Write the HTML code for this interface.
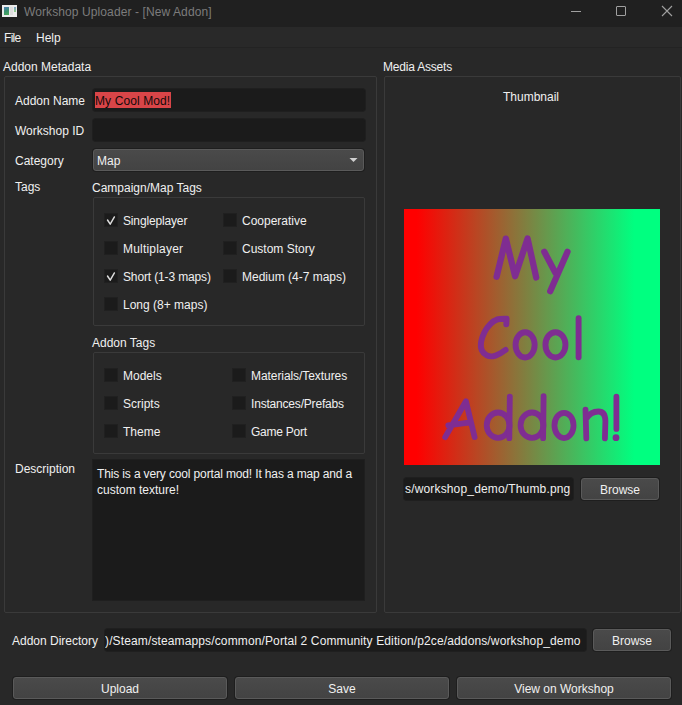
<!DOCTYPE html>
<html><head><meta charset="utf-8">
<style>
*{margin:0;padding:0;box-sizing:border-box}
html,body{width:682px;height:705px;overflow:hidden;background:#282828}
body{position:relative;font-family:"Liberation Sans",sans-serif;font-size:12px;color:#f0f0f0}
.a{position:absolute;white-space:nowrap}
.t{position:absolute;white-space:nowrap;line-height:14px;height:14px}
#title{left:0;top:0;width:682px;height:27px;background:#202020}
#menu{left:0;top:27px;width:682px;height:21px;background:#292929;border-bottom:1px solid #232323}
.gb{position:absolute;border:1px solid #3a3a3a;border-radius:2px}
.le{position:absolute;background:#1b1b1b;border-radius:3px;height:22px;box-shadow:0 0 0 1px #1f1f1f}
.btn{position:absolute;height:22px;border:1px solid #5a5a5a;border-radius:3px;background:linear-gradient(#4a4a4a,#434343);box-shadow:0 0 0 1px #1e1e1e;text-align:center;line-height:22px}
.cb{position:absolute;width:14px;height:14px;background:#1b1b1b;border:1px solid #202020}
</style></head><body>
<div id="title" class="a">
  <div class="a" style="left:2px;top:5px;width:15px;height:12px;background:#ececec"></div>
  <div class="a" style="left:4px;top:7px;width:5px;height:8px;background:linear-gradient(160deg,#4f7fb8,#3a9070 50%,#4cab58)"></div>
  <div class="a" style="left:10px;top:7px;width:3px;height:8px;background:#dedede"></div>
  <div class="a" style="left:14px;top:7px;width:2px;height:5px;background:linear-gradient(#7fa0d0,#90d080)"></div>
  <div class="t" style="left:24px;top:5px;color:#7c7c7c;letter-spacing:0.1px">Workshop Uploader - [New Addon]</div>
  <div class="a" style="left:571px;top:11px;width:10px;height:1px;background:#a0a0a0"></div>
  <div class="a" style="left:616px;top:6px;width:10px;height:10px;border:1px solid #a0a0a0;border-radius:1px"></div>
  <svg class="a" style="left:661px;top:5px" width="12" height="12" viewBox="0 0 12 12"><path d="M1 1L11 11M11 1L1 11" stroke="#a0a0a0" stroke-width="1.1"/></svg>
</div>
<div id="menu" class="a">
  <div class="t" style="left:4px;top:4px;letter-spacing:-0.7px">File</div>
  <div class="t" style="left:36px;top:4px">Help</div>
</div>

<div class="t" style="left:3px;top:60px">Addon Metadata</div>
<div class="gb" style="left:4px;top:76px;width:373px;height:537px"></div>
<div class="t" style="left:383px;top:60px;letter-spacing:-0.2px">Media Assets</div>
<div class="gb" style="left:384px;top:76px;width:297px;height:537px"></div>

<div class="t" style="left:15px;top:94px">Addon Name</div>
<div class="le" style="left:93px;top:89px;width:272px"></div>
<div class="a" style="left:95px;top:92px;width:76px;height:16px;background:#d94548"></div>
<div class="t" style="left:95px;top:94px;color:#120a0a;letter-spacing:0.1px">My Cool Mod!</div>

<div class="t" style="left:15px;top:124px">Workshop ID</div>
<div class="le" style="left:93px;top:119px;width:272px"></div>

<div class="t" style="left:15px;top:154px">Category</div>
<div class="btn" style="left:93px;top:149px;width:271px;text-align:left;padding-left:3px"><span>Map</span></div>
<svg class="a" style="left:349px;top:157px" width="9" height="6" viewBox="0 0 9 6"><path d="M0.5 1L8.5 1L4.5 5Z" fill="#d0d0d0"/></svg>

<div class="t" style="left:15px;top:180px">Tags</div>
<div class="t" style="left:92px;top:181px">Campaign/Map Tags</div>
<div class="gb" style="left:93px;top:197px;width:272px;height:129px"></div>
<div class="cb" style="left:104px;top:213px"></div><div class="t" style="left:123px;top:214px;letter-spacing:-0.15px">Singleplayer</div>
<div class="cb" style="left:223px;top:213px"></div><div class="t" style="left:242px;top:214px">Cooperative</div>
<div class="cb" style="left:104px;top:241px"></div><div class="t" style="left:123px;top:242px;letter-spacing:0.2px">Multiplayer</div>
<div class="cb" style="left:223px;top:241px"></div><div class="t" style="left:242px;top:242px">Custom Story</div>
<div class="cb" style="left:104px;top:269px"></div><div class="t" style="left:123px;top:270px;letter-spacing:-0.14px">Short (1-3 maps)</div>
<div class="cb" style="left:223px;top:269px"></div><div class="t" style="left:242px;top:270px">Medium (4-7 maps)</div>
<div class="cb" style="left:104px;top:297px"></div><div class="t" style="left:123px;top:298px">Long (8+ maps)</div>
<svg class="a" style="left:104px;top:213px" width="14" height="13" viewBox="0 0 14 13"><path d="M3.5 7L6.2 11.2L10.4 3.9" stroke="#dedede" stroke-width="1.45" fill="none" stroke-linecap="round" stroke-linejoin="round"/></svg>
<svg class="a" style="left:104px;top:269px" width="14" height="13" viewBox="0 0 14 13"><path d="M3.5 7L6.2 11.2L10.4 3.9" stroke="#dedede" stroke-width="1.45" fill="none" stroke-linecap="round" stroke-linejoin="round"/></svg>

<div class="t" style="left:92px;top:336px">Addon Tags</div>
<div class="gb" style="left:93px;top:352px;width:272px;height:102px"></div>
<div class="cb" style="left:104px;top:368px"></div><div class="t" style="left:123px;top:369px">Models</div>
<div class="cb" style="left:232px;top:368px"></div><div class="t" style="left:251px;top:369px;letter-spacing:-0.07px">Materials/Textures</div>
<div class="cb" style="left:104px;top:396px"></div><div class="t" style="left:123px;top:397px">Scripts</div>
<div class="cb" style="left:232px;top:396px"></div><div class="t" style="left:251px;top:397px;letter-spacing:-0.19px">Instances/Prefabs</div>
<div class="cb" style="left:104px;top:424px"></div><div class="t" style="left:123px;top:425px">Theme</div>
<div class="cb" style="left:232px;top:424px"></div><div class="t" style="left:251px;top:425px;letter-spacing:-0.25px">Game Port</div>

<div class="t" style="left:15px;top:462px">Description</div>
<div class="le" style="left:93px;top:460px;width:271px;height:140px;border-radius:0"></div>
<div class="t" style="left:97px;top:467px;letter-spacing:-0.14px">This is a very cool portal mod! It has a map and a</div>
<div class="t" style="left:97px;top:483px">custom texture!</div>

<div class="t" style="left:503px;top:90px">Thumbnail</div>
<div class="a" style="left:404px;top:209px;width:256px;height:256px;background:linear-gradient(to right,#ff0000 5%,#00ff80 90%)"></div>
<svg class="a" style="left:404px;top:209px" width="256" height="256" viewBox="0 0 256 256"><g fill="none" stroke="#7f2d92" stroke-linecap="round" stroke-linejoin="round">
<g stroke-width="6.3"><path d="M92.6 67.8L101.8 29.6L111.1 67.2L123.6 29.6L132.2 68.5"/>
<path d="M140.3 42.8L151.5 64M163.5 42.8L146.2 82.2"/></g>
<g stroke-width="5.9"><path d="M102.3 115.4L102.6 109.7C101.1 109.8 96.1 109.5 93.4 110.4C90.7 111.3 88.4 113.0 86.3 115.1C84.2 117.2 82.1 120.0 80.6 122.9C79.1 125.9 77.6 129.7 77.1 132.8C76.6 135.9 76.8 139.1 77.8 141.3C78.8 143.6 80.9 145.3 82.8 146.3C84.7 147.3 87.0 147.6 89.1 147.3C91.2 147.1 93.4 145.9 95.5 144.8C97.6 143.7 100.6 141.6 101.6 140.9"/>
<ellipse cx="121.1" cy="135.85" rx="9.55" ry="12.6"/>
<ellipse cx="151.45" cy="135.85" rx="10" ry="12.6"/>
<path d="M174.6 109.3L174.6 148.2"/></g>
<g stroke-width="5.8"><path d="M41.2 228.1L61.9 192.2L70.6 228.1M44.3 216.4L64.5 213.6"/>
<ellipse cx="94.1" cy="216.2" rx="11.4" ry="12.7"/><path d="M105.8 187.6L105.3 229.2"/>
<ellipse cx="128" cy="216.2" rx="11.45" ry="12.7"/><path d="M139.6 187.1L139.1 229.2"/>
<ellipse cx="160" cy="216.45" rx="9.55" ry="12.6"/>
<path d="M181.5 200.6L182.3 229.3M182 210C185 205 190 202.5 194.4 202.5C199 202.5 201.3 206 201.4 212L200.9 229.3"/>
<path d="M212.4 187.7L212.4 219.9"/></g>
</g><circle cx="212" cy="228.7" r="3.4" fill="#7f2d92"/></svg>
<div class="le" style="left:404px;top:478px;width:169px;overflow:hidden"><div class="t" style="left:1px;top:4px;letter-spacing:0.16px">s/workshop_demo/Thumb.png</div></div>
<div class="btn" style="left:581px;top:478px;width:78px">Browse</div>

<div class="t" style="left:12px;top:634px">Addon Directory</div>
<div class="le" style="left:105px;top:629px;width:481px;height:22px;overflow:hidden"><div class="t" style="left:0px;top:5px;letter-spacing:0.13px">)/Steam/steamapps/common/Portal 2 Community Edition/p2ce/addons/workshop_demo</div></div>
<div class="btn" style="left:593px;top:629px;width:78px">Browse</div>

<div class="btn" style="left:13px;top:677px;width:214px">Upload</div>
<div class="btn" style="left:235px;top:677px;width:214px">Save</div>
<div class="btn" style="left:457px;top:677px;width:214px">View on Workshop</div>
</body></html>
